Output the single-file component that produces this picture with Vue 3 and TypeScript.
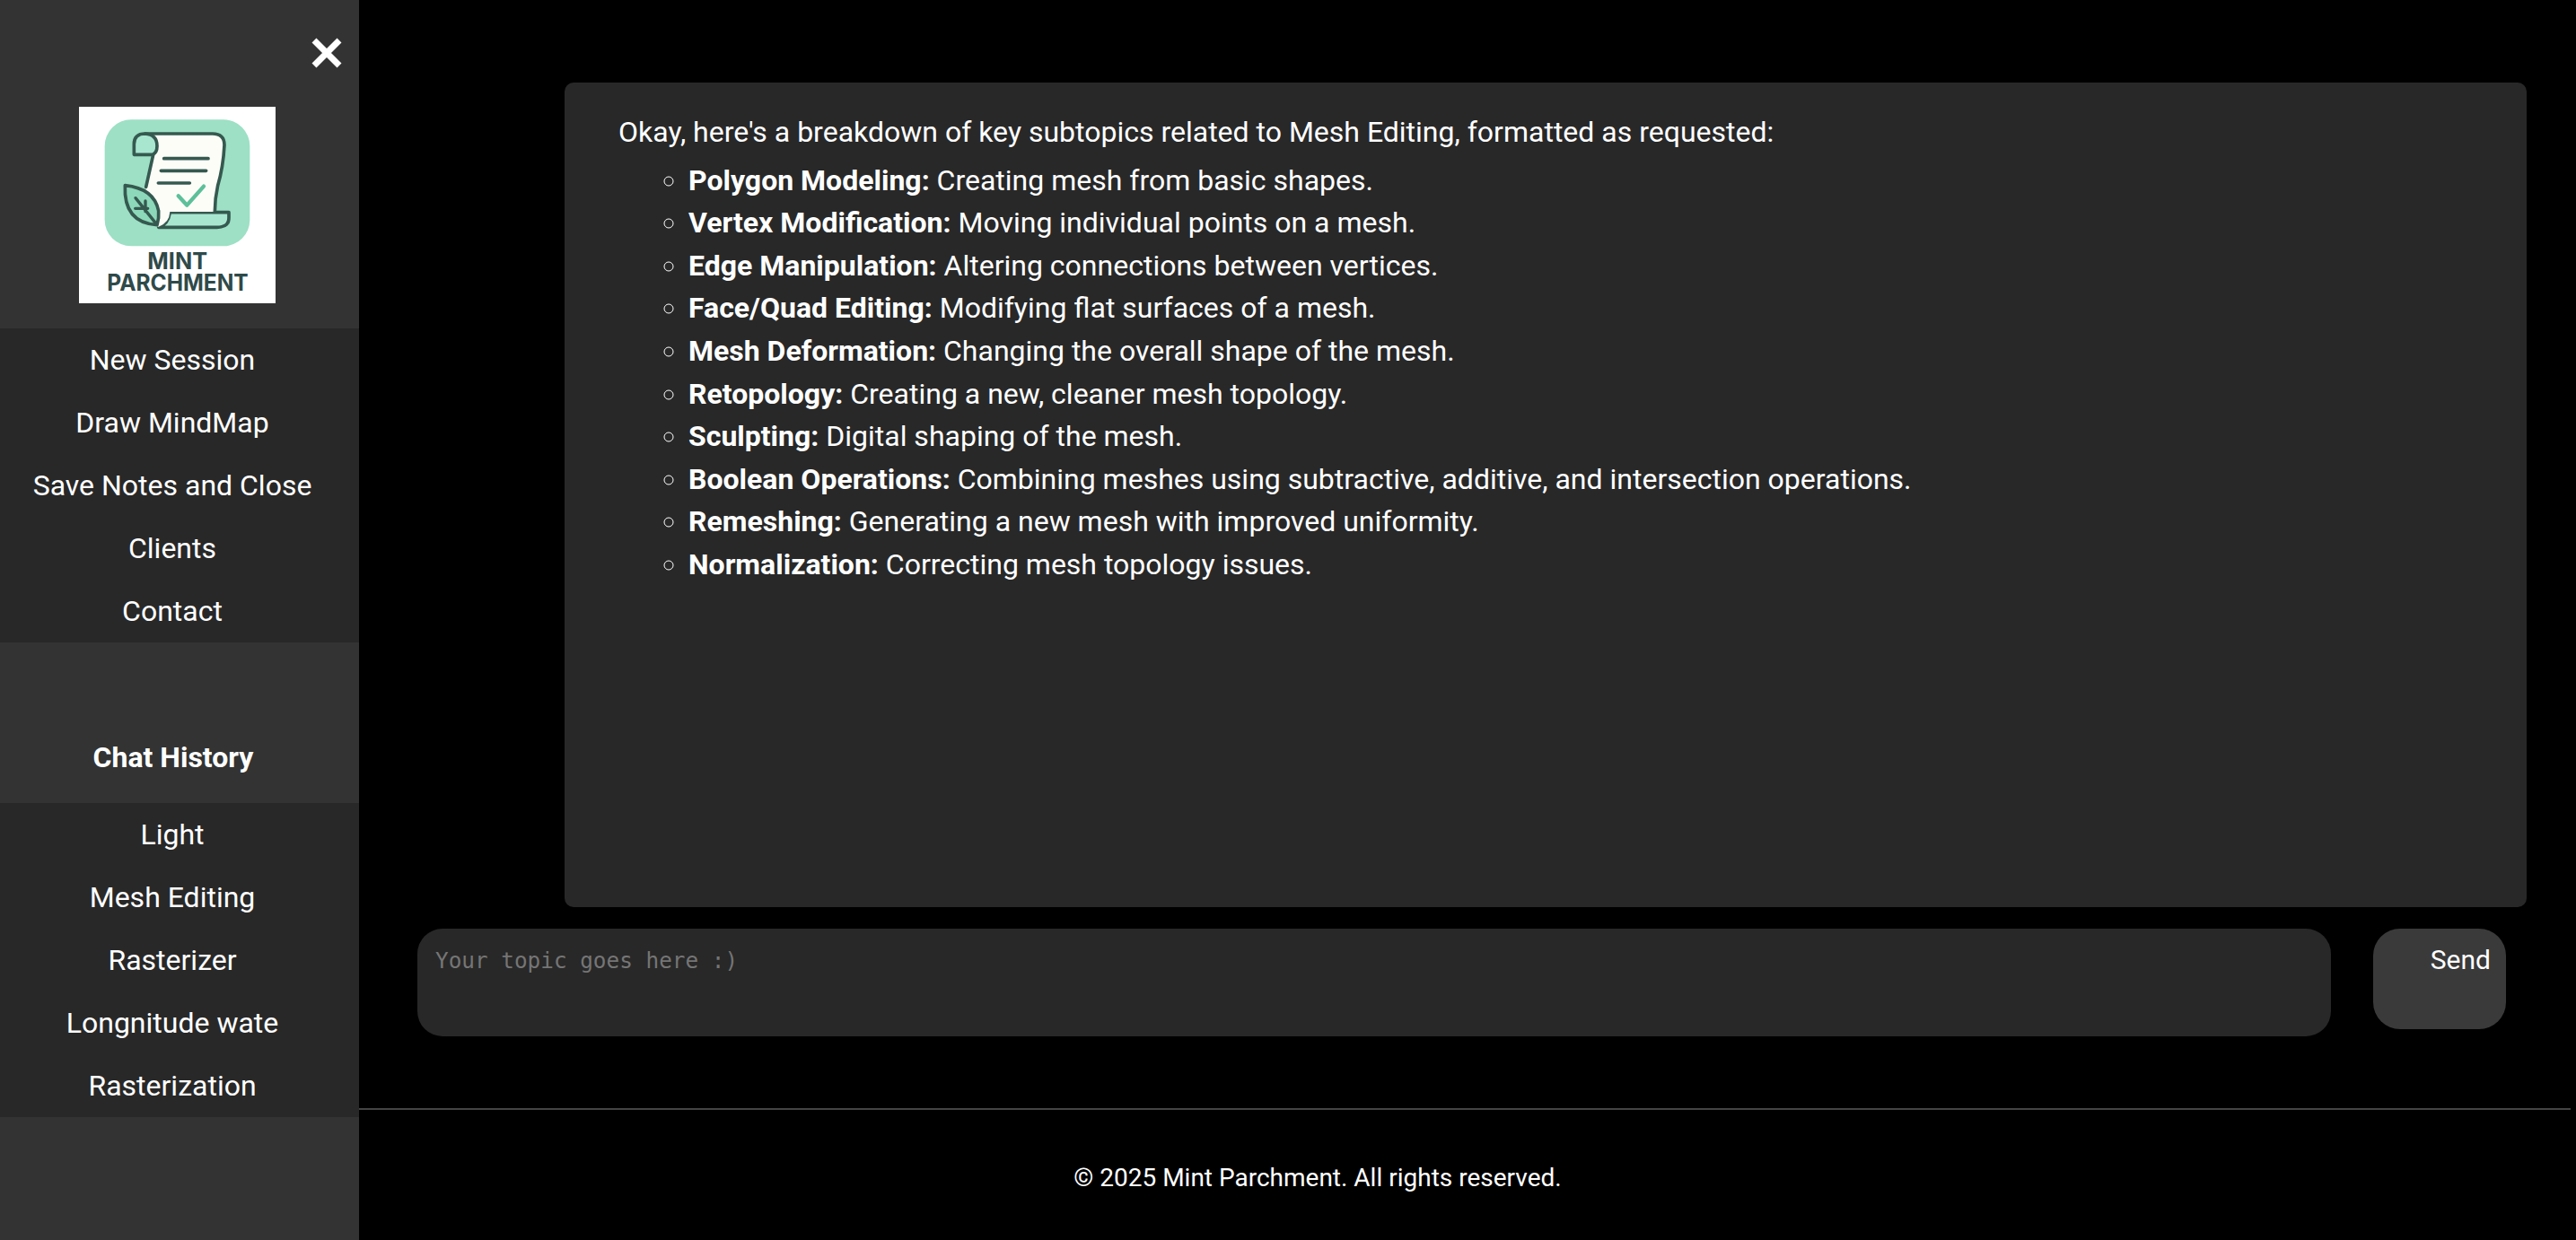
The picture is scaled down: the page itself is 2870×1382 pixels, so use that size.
<script setup lang="ts">
const navItems: string[] = ['New Session', 'Draw MindMap', 'Save Notes and Close', 'Clients', 'Contact']
const historyItems: string[] = ['Light', 'Mesh Editing', 'Rasterizer', 'Longnitude wate', 'Rasterization']
const topics: { title: string; text: string }[] = [
  { title: 'Polygon Modeling:', text: 'Creating mesh from basic shapes.' },
  { title: 'Vertex Modification:', text: 'Moving individual points on a mesh.' },
  { title: 'Edge Manipulation:', text: 'Altering connections between vertices.' },
  { title: 'Face/Quad Editing:', text: 'Modifying flat surfaces of a mesh.' },
  { title: 'Mesh Deformation:', text: 'Changing the overall shape of the mesh.' },
  { title: 'Retopology:', text: 'Creating a new, cleaner mesh topology.' },
  { title: 'Sculpting:', text: 'Digital shaping of the mesh.' },
  { title: 'Boolean Operations:', text: 'Combining meshes using subtractive, additive, and intersection operations.' },
  { title: 'Remeshing:', text: 'Generating a new mesh with improved uniformity.' },
  { title: 'Normalization:', text: 'Correcting mesh topology issues.' },
]
</script>

<template>
  <div class="page">
    <aside class="sidebar">
      <div class="close-row">
        <svg class="close" width="34" height="34" viewBox="0 0 34 34" aria-label="Close">
          <path d="M3 3 L31 31 M31 3 L3 31" stroke="#fff" stroke-width="7" fill="none" />
        </svg>
      </div>
      <div class="logo">
        <svg width="219" height="219" viewBox="84 57 657 657">
          <rect x="84" y="57" width="657" height="657" fill="#fff" />
          <rect x="170" y="100" width="485" height="423" rx="88" fill="#9de0c5" />
          <path d="M388 410 H585 V428 Q585 460 545 460 H350 Q382 450 388 410 Z" fill="#a8e6d0" stroke="#35594f" stroke-width="11" stroke-linejoin="round" />
          <path d="M305 147 H530 Q570 147 570 185 Q566 260 548 320 Q538 365 538 408 H388 Q386 445 350 458 Q325 455 300 420 L308 330 L332 218 Q348 190 335 160 Z" fill="#fdfdf8" />
          <path d="M305 147 H530 Q570 147 570 185 Q566 260 548 320 Q538 365 538 408 M332 218 L308 325" fill="none" stroke="#35594f" stroke-width="11" stroke-linecap="round" />
          <path d="M268 217 V182 Q268 147 305 147 Q345 150 345 188 Q345 210 330 217 Z" fill="#a8e6d0" stroke="#35594f" stroke-width="11" stroke-linejoin="round" />
          <path d="M368 230 H516 M358 271 H509 M349 312 H454" stroke="#35594f" stroke-width="11" stroke-linecap="round" fill="none" />
          <path d="M416 355 L445 386 L501 323" stroke="#5cc09a" stroke-width="13" stroke-linecap="round" stroke-linejoin="round" fill="none" />
          <path d="M238 320 Q335 330 350 405 Q352 430 345 452 Q232 445 238 320 Z" fill="#8dd8ba" stroke="#35594f" stroke-width="11" stroke-linejoin="round" />
          <path d="M273 362 L342 448 M272 397 H314 M306 372 V407" stroke="#35594f" stroke-width="10" stroke-linecap="round" fill="none" />
          <text class="logo-text" x="413" y="601" text-anchor="middle" font-size="76" textLength="200" lengthAdjust="spacingAndGlyphs">MINT</text>
          <text class="logo-text" x="414" y="672" text-anchor="middle" font-size="76" textLength="472" lengthAdjust="spacingAndGlyphs">PARCHMENT</text>
        </svg>
      </div>
      <nav class="menu">
        <a v-for="item in navItems" :key="item" class="menu-item">{{ item }}</a>
      </nav>
      <h2 class="history-title">Chat History</h2>
      <nav class="menu">
        <a v-for="item in historyItems" :key="item" class="menu-item">{{ item }}</a>
      </nav>
    </aside>

    <main class="main">
      <div class="content">
        <section class="chat">
          <p class="intro">Okay, here's a breakdown of key subtopics related to Mesh Editing, formatted as requested:</p>
          <ul class="topics">
            <li v-for="t in topics" :key="t.title"><strong>{{ t.title }}</strong> {{ t.text }}</li>
          </ul>
        </section>
        <div class="composer">
          <textarea class="input" placeholder="Your topic goes here :)"></textarea>
          <button class="send" type="button">Send</button>
        </div>
      </div>
      <footer class="footer">© 2025 Mint Parchment. All rights reserved.</footer>
    </main>
  </div>
</template>

<style>
html, body { margin: 0; background: #000; overflow: hidden; }
</style>

<style scoped>
.page {
  display: flex;
  height: 1382px;
  background: #000;
  color: #fff;
  font-family: Roboto, "Liberation Sans", sans-serif;
}
.sidebar {
  width: 400px;
  flex: none;
  background: #333;
  display: flex;
  flex-direction: column;
}
.close-row {
  display: flex;
  justify-content: flex-end;
  padding: 42px 19px 0 0;
  height: 76px;
  box-sizing: border-box;
}
.close { display: block; }
.logo {
  padding: 43px 0 28px 88px;
  height: 219px;
}
.logo svg { display: block; }
.logo-text {
  font-family: Inter, Roboto, sans-serif;
  font-weight: 700;
  fill: #2f4a4a;
}
.menu {
  background: #282828;
  display: flex;
  flex-direction: column;
  padding-right: 16px;
}
.menu-item {
  height: 70px;
  line-height: 70px;
  text-align: center;
  font-size: 32px;
}
.history-title {
  margin: 0;
  height: 179px;
  padding-top: 108px;
  box-sizing: border-box;
  padding-right: 14px;
  text-align: center;
  font-size: 32px;
  line-height: 40px;
  font-weight: 700;
}
.main {
  flex: 1;
  min-width: 0;
  display: flex;
  flex-direction: column;
}
.content {
  height: 1235px;
  box-sizing: border-box;
  padding-top: 92px;
}
.chat {
  margin-left: 229px;
  width: 2186px;
  height: 919px;
  box-sizing: border-box;
  background: #282828;
  border-radius: 10px;
  padding: 32px 60px;
  font-size: 32px;
  line-height: 47.6px;
}
.intro { margin: 0; }
.topics {
  margin: 6px 0 0;
  padding: 0 0 0 78px;
  list-style: circle;
}
.composer {
  display: flex;
  align-items: flex-start;
  margin: 24px 0 0 65px;
  gap: 47px;
}
.input {
  width: 2132px;
  height: 120px;
  box-sizing: border-box;
  background: #282828;
  color: #fff;
  border: none;
  outline: none;
  resize: none;
  border-radius: 28px;
  padding: 21px 20px;
  font-family: "DejaVu Sans Mono", monospace;
  font-size: 24.35px;
  line-height: 30px;
}
.input::placeholder { color: #757575; opacity: 1; }
.send {
  width: 148px;
  height: 112px;
  box-sizing: border-box;
  background: #3a3a3a;
  color: #fff;
  border: none;
  border-radius: 30px;
  padding: 19px 17px 0 0;
  font-family: Roboto, sans-serif;
  font-size: 30px;
  line-height: 32px;
  display: flex;
  justify-content: flex-end;
  align-items: flex-start;
}
.footer {
  width: 2464px;
  height: 147px;
  box-sizing: border-box;
  border-top: 2px solid #444;
  padding: 58px 328px 0 0;
  text-align: center;
  font-size: 28px;
  line-height: 36px;
}
</style>
